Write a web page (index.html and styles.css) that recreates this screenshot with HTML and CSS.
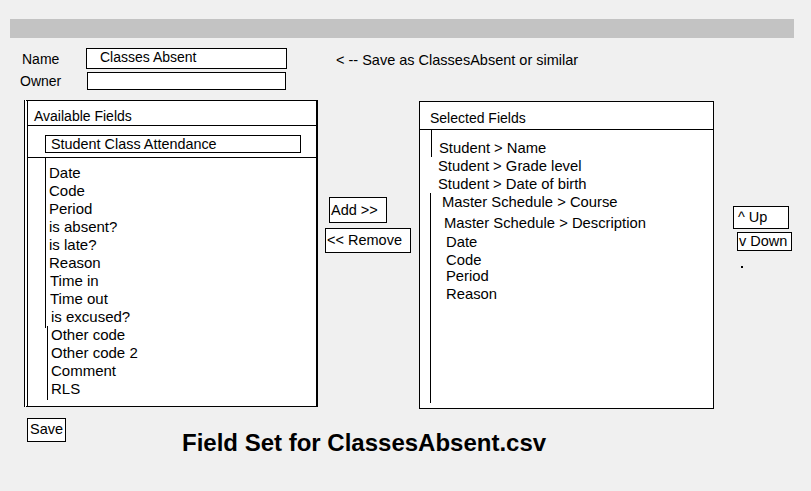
FILE: index.html
```html
<!DOCTYPE html>
<html>
<head>
<meta charset="utf-8">
<title>Field Set</title>
<link rel="stylesheet" href="styles.css">
</head>
<body>
<div class="bar"></div>

<div class="meta">
  <div class="row row-name">
    <span class="label label-name">Name</span>
    <div class="input input-name">Classes Absent</div>
    <span class="hint">&lt; -- Save as ClassesAbsent or similar</span>
  </div>
  <div class="row row-owner">
    <span class="label label-owner">Owner</span>
    <div class="input input-owner"></div>
  </div>
</div>

<div class="main">
  <div class="panel avail">
    <div class="avail-head">Available Fields</div>
    <div class="avail-select">
      <div class="dropdown">Student Class Attendance</div>
    </div>
    <div class="avail-list">
      <div class="grp grp-a">
        <div class="item">Date</div>
        <div class="item">Code</div>
        <div class="item">Period</div>
        <div class="item">is absent?</div>
        <div class="item">is late?</div>
        <div class="item">Reason</div>
        <div class="item s1">Time in</div>
        <div class="item s1">Time out</div>
        <div class="item s2">is excused?</div>
      </div>
      <div class="grp grp-b">
        <div class="item">Other code</div>
        <div class="item">Other code 2</div>
        <div class="item">Comment</div>
        <div class="item">RLS</div>
      </div>
    </div>
  </div>

  <div class="mid">
    <div class="btn btn-add">Add &gt;&gt;</div>
    <div class="btn btn-remove">&lt;&lt; Remove</div>
  </div>

  <div class="panel sel">
    <div class="sel-head">Selected Fields</div>
    <div class="sel-list">
      <div class="sitem first">Student &gt; Name</div>
      <div class="sitem stu">Student &gt; Grade level</div>
      <div class="sitem stu">Student &gt; Date of birth</div>
      <div class="sgrp">
        <div class="sitem course">Master Schedule &gt; Course</div>
        <div class="sitem desc">Master Schedule &gt; Description</div>
        <div class="sitem fld date">Date</div>
        <div class="sitem fld">Code</div>
        <div class="sitem fld period">Period</div>
        <div class="sitem fld">Reason</div>
      </div>
    </div>
  </div>

  <div class="order">
    <div class="btn btn-up">^ Up</div>
    <div class="btn btn-down">v Down</div>
    <div class="dot"></div>
  </div>
</div>

<div class="bottom">
  <div class="btn btn-save">Save</div>
  <h1 class="title">Field Set for ClassesAbsent.csv</h1>
</div>
</body>
</html>
```

FILE: styles.css
```css
* { box-sizing: border-box; }

html, body {
  margin: 0;
  padding: 0;
  background: #f0f0f0;
}

body {
  font-family: "Liberation Sans", Arial, sans-serif;
  font-size: 14px;
  color: #000;
  width: 811px;
  height: 491px;
  overflow: hidden;
}

.bar {
  margin: 19px 17px 0 10px;
  height: 19px;
  background: #c3c3c3;
}

/* name / owner */
.meta {
  margin-top: 10px;
  display: flex;
  flex-direction: column;
  gap: 3px;
}

.row {
  display: flex;
  align-items: center;
}

.label-name { margin-left: 22px; width: 64px; }
.label-owner { margin-left: 20px; width: 67px; }

.input {
  background: #fff;
  border: 1px solid #000;
}

.input-name {
  width: 201px;
  height: 21px;
  line-height: 17px;
  padding-left: 13px;
}

.input-owner {
  width: 199px;
  height: 18px;
}

.hint {
  margin-left: 49px;
  padding-top: 2px;
  font-size: 14.5px;
}

/* main area */
.main {
  margin-top: 10px;
  display: flex;
  align-items: flex-start;
}

.panel {
  background: #fff;
  display: flex;
  flex-direction: column;
}

.avail {
  margin-left: 24px;
  width: 294px;
  height: 307px;
  border-top: 1px solid #000;
  border-bottom: 1px solid #000;
  border-left: 4px double #000;
  border-right: 2px solid #000;
}

.avail-head {
  height: 25px;
  padding: 5px 0 0 6px;
  line-height: 20px;
  border-bottom: 1px solid #000;
}

.avail-select {
  height: 32px;
  padding: 9px 0 0 17px;
  border-bottom: 1px solid #000;
}

.dropdown {
  width: 256px;
  height: 18px;
  border: 1px solid #000;
  padding-left: 5px;
  line-height: 16px;
  font-size: 14.4px;
}

.avail-list {
  padding-left: 17px;
  font-size: 15px;
}

.grp { border-left: 1px solid #000; }
.grp-a { padding-top: 6px; padding-bottom: 2px; }
.grp-b { margin-left: 2px; margin-top: -2px; padding-bottom: 2px; }

.item {
  line-height: 18px;
  padding-left: 3px;
  white-space: nowrap;
}

.item.s1 { padding-left: 4px; }
.item.s2 { padding-left: 5px; }
.grp-b .item { padding-left: 3px; }

/* add / remove */
.mid {
  margin-left: 7px;
  width: 85px;
  display: flex;
  flex-direction: column;
  align-items: flex-start;
}

.btn {
  background: #fff;
  border: 1px solid #000;
  white-space: nowrap;
}

.btn-add {
  margin: 97px 0 0 4px;
  width: 58px;
  height: 26px;
  line-height: 24px;
  padding-left: 1px;
  font-size: 14.5px;
}

.btn-remove {
  margin-top: 5px;
  width: 86px;
  height: 25px;
  line-height: 23px;
  padding-left: 1px;
  font-size: 14.5px;
}

/* selected */
.sel {
  margin-left: 9px;
  margin-top: 1px;
  width: 295px;
  height: 308px;
  border: 1px solid #000;
}

.sel-head {
  height: 28px;
  padding: 6px 0 0 10px;
  line-height: 20px;
  border-bottom: 1px solid #000;
}

.sel-list {
  font-size: 14.8px;
}

.sitem {
  line-height: 18px;
  white-space: nowrap;
}

.sitem.first {
  margin-left: 11px;
  border-left: 1px solid #000;
  padding: 9px 0 0 7px;
  height: 27px;
}

.sitem.stu { margin-left: 18px; }

.sgrp {
  margin-left: 10px;
  margin-top: 0;
  border-left: 1px solid #000;
  padding-bottom: 100px;
}

.sitem.course { padding-left: 11px; }
.sitem.desc { padding-left: 13px; margin-top: 3px; }
.sitem.fld { padding-left: 15px; }
.sitem.date { margin-top: 1px; }
.sitem.period { margin-top: -2px; }

/* up / down */
.order {
  margin-left: 19px;
  display: flex;
  flex-direction: column;
  align-items: flex-start;
}

.btn-up {
  margin-top: 106px;
  width: 56px;
  height: 23px;
  line-height: 21px;
  padding-left: 4px;
  font-size: 14.5px;
}

.btn-down {
  margin: 3px 0 0 4px;
  width: 55px;
  height: 19px;
  line-height: 17px;
  padding-left: 1px;
  font-size: 14.5px;
}

.dot {
  margin: 15px 0 0 8px;
  width: 2px;
  height: 2px;
  background: #000;
}

/* bottom */
.bottom {
  margin-top: 9px;
  display: flex;
  align-items: flex-start;
}

.btn-save {
  margin-left: 27px;
  width: 39px;
  height: 24px;
  line-height: 21px;
  padding-left: 2px;
  font-size: 14.5px;
}

.title {
  margin: 11px 0 0 116px;
  font-family: "Liberation Sans", Arial, sans-serif;
  font-weight: bold;
  font-size: 24px;
  line-height: 28px;
  white-space: nowrap;
}
```
